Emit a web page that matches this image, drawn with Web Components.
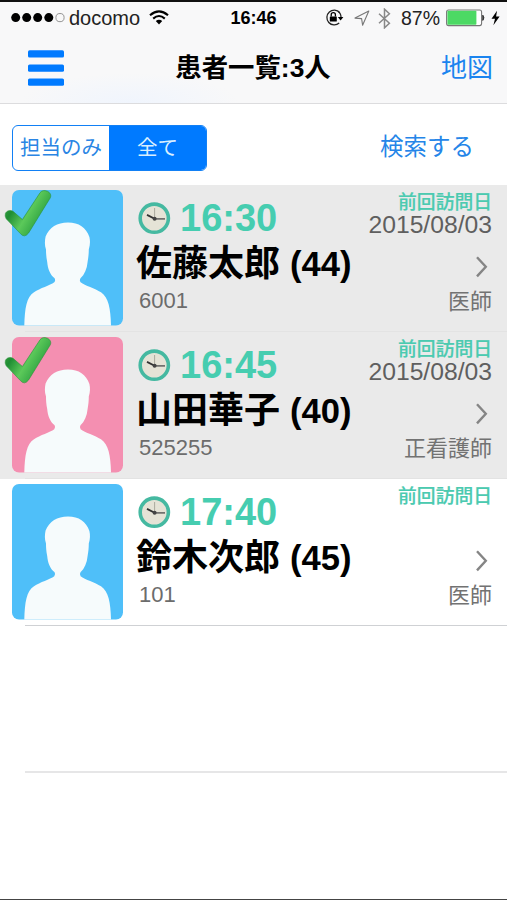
<!DOCTYPE html>
<html lang="ja">
<head>
<meta charset="utf-8">
<title>患者一覧</title>
<style>
html,body{margin:0;padding:0}
body{width:507px;height:900px;overflow:hidden;background:#fff;font-family:"Liberation Sans","Noto Sans CJK JP",sans-serif;color:#000}
</style>
</head>
<body>
<patient-screen></patient-screen>
<script>
const define = (name, html, setup) => customElements.define(name, class extends HTMLElement {
  connectedCallback() {
    if (this.shadowRoot) return;
    this.attachShadow({mode: 'open'}).innerHTML = html;
    if (setup) setup(this, this.shadowRoot);
  }
});

define('status-bar', `
<style>
:host{display:grid;grid-template-columns:1fr auto 1fr;align-items:center;height:32px;padding:0 7px 0 11px;box-sizing:border-box;white-space:nowrap}
.l,.r{display:flex;align-items:center}
.r{justify-content:flex-end}
.c{font-weight:bold;font-size:18px;line-height:32px;margin-left:-4px}
.n{font-size:20px;line-height:32px}
svg{display:block;flex:none}
</style>
<div class="l">
<svg width="54" height="12" viewBox="0 0 54 12"><g fill="#000"><circle cx="4.7" cy="5.6" r="4.5"/><circle cx="15.7" cy="5.6" r="4.5"/><circle cx="26.7" cy="5.6" r="4.5"/><circle cx="37.8" cy="5.6" r="4.5"/></g><circle cx="49" cy="5.6" r="4.1" fill="none" stroke="#888" stroke-width=".9"/></svg>
<span class="n" style="margin-left:4px;color:#222">docomo</span>
<svg style="margin-left:9px" width="20" height="16" viewBox="0 0 20 16"><g fill="none" stroke="#000" stroke-width="2.1"><path d="M1 5.2Q10 -2.6 19 5.2"/><path d="M4.2 8.6Q10 3.4 15.8 8.6"/></g><path d="M6.8 11Q10 8.3 13.2 11L10 14.4Z"/></svg>
</div>
<span class="c">16:46</span>
<div class="r">
<svg width="19" height="18" viewBox="0 0 19 18"><path d="M14.8 3.6A7.4 7.4 0 1 0 14.2 14.1" fill="none" stroke="#222" stroke-width="1.3"/><path d="M13 2.2A7.6 7.6 0 0 1 16 8.6" fill="none" stroke="#222" stroke-width="1.3"/><path d="M12.8 7.9h5.6l-2.8 3.5z"/><rect x="4.8" y="7.4" width="7" height="5.2" rx=".5"/><path d="M6.2 7.6V5.8a2.1 2.1 0 0 1 4.2 0V7.6" fill="none" stroke="#000" stroke-width="1.3"/></svg>
<svg style="margin-left:10px" width="16" height="17" viewBox="0 0 16 17"><path d="M1 8.1L14.8 1L8.6 15.2L7.6 8.6Z" fill="none" stroke="#777" stroke-width="1.1" stroke-linejoin="round"/></svg>
<svg style="margin-left:8px" width="13" height="21" viewBox="0 0 13 21"><path d="M1 5.8L11.4 15.2L6.5 19.8V1.2L11.4 5.8L1 15.2" fill="none" stroke="#888" stroke-width="1.5"/></svg>
<span class="n" style="margin-left:10px;font-size:19.5px;color:#222">87%</span>
<svg style="margin-left:6px" width="39" height="18" viewBox="0 0 39 18"><rect x=".6" y="1" width="35" height="15.6" rx="2" fill="#fff" stroke="#777" stroke-width="1.1"/><rect x="1.4" y="1.8" width="29" height="14" rx=".8" fill="#4cd964"/><path d="M36.8 6.2Q39 8.8 36.8 11.4z" fill="#333" stroke="#333"/></svg>
<svg style="margin-left:6px" width="9" height="16" viewBox="0 0 9 16"><path d="M6 .8L.5 8.8H4L2.4 15.2L8.6 6.6H5.1Z"/></svg>
</div>`);

define('nav-bar', `
<style>
:host{display:grid;grid-template-columns:1fr auto 1fr;align-items:center;height:68px;padding:0 14px 0 28px;box-sizing:border-box}
svg{display:block}
.t{font-size:26.4px;font-weight:bold;line-height:40px;margin-left:-15px}
.m{justify-self:end;font-size:26px;line-height:40px;color:#1b84ef}
</style>
<svg width="36" height="36" viewBox="0 0 36 36" fill="#007aff"><rect y=".2" width="36" height="7.4" rx="1.6"/><rect y="14.4" width="36" height="7.4" rx="1.6"/><rect y="28.4" width="36" height="7.4" rx="1.6"/></svg>
<span class="t"><slot name="title"></slot></span><span class="m"><slot name="action"></slot></span>`);

define('filter-bar', `
<style>
:host{display:flex;align-items:center;justify-content:space-between;height:81px;padding:7px 33px 0 12px;box-sizing:border-box}
.seg{display:flex;width:195px;height:46px;box-sizing:border-box;border:1.5px solid #1280f5;border-radius:6px;overflow:hidden;font-size:20.5px;line-height:44px;text-align:center;background:#fff}
.a{width:96px;color:#2a85e4}
.b{flex:1;background:#007aff;color:#d9efff}
.s{font-size:23.5px;line-height:40px;color:#2585e8;margin-top:-2px}
</style>
<div class="seg"><span class="a">担当のみ</span><span class="b">全て</span></div><span class="s">検索する</span>`);

define('patient-avatar', `
<style>
:host{display:block;position:relative;width:111px;height:136px}
svg{display:block}
.k{position:absolute;left:-8px;top:-1px}
:host(:not([checked])) .k{display:none}
</style>
<svg width="111" height="136" viewBox="0 0 111 136"><rect width="111" height="135.5" rx="7" fill="var(--tone,#4fbff9)"/><path d="M12.3 135.5C12.8 118 14.5 107 22 102.2C28 98 38 95.5 42.3 92.2Q43.8 90.5 42.6 88.3C38 84.5 35.8 79 35.2 72C34.2 67 34 63 34 59.5C32.4 55 32.8 50 33.6 46.5C37.5 37.5 45 32.6 56 32.6C67 32.6 74 37.5 77.4 47C78.3 51 78.2 55 76.8 59.5C76.8 64 76.3 68 75.6 72C75 79 72.5 84.5 68.5 88.3Q67.2 90.5 68.6 92.2C73 95.5 83 98.5 89 102.2C96.5 107.5 98.5 118 99 135.5Z" fill="#f6fbfc"/></svg>
<svg class="k" width="50" height="50" viewBox="0 0 50 50"><defs><linearGradient id="g" x1="0" y1=".2" x2="1" y2=".8"><stop offset="0" stop-color="#3da63f"/><stop offset=".22" stop-color="#1f8d33"/><stop offset=".5" stop-color="#5cc95a"/><stop offset=".75" stop-color="#35a845"/><stop offset="1" stop-color="#2a9a3a"/></linearGradient></defs><path d="M1.4 24.5C2.6 21.5 6.5 20.8 9 22.3L18.4 30.5L36 3.8C37.5 1.6 40.5 .9 43.5 2.3C46.5 3.8 47.5 6.5 46.2 9L24.6 44Q20.4 49.4 16.4 44.6L2.2 29.8Q.6 27 1.4 24.5Z" fill="url(#g)" stroke="#299239" stroke-width=".6"/></svg>`);

define('visit-clock', `
<style>:host{display:block;width:33px;height:33px}svg{display:block}</style>
<svg width="33" height="33" viewBox="0 0 33 33"><circle cx="16.3" cy="16.2" r="14.1" fill="#e5e3d6" stroke="#45b9a1" stroke-width="3.6"/><path d="M16.6 16.7V6" stroke="#aaa99e" stroke-width="1"/><path d="M16.6 16.7L9 12.9" stroke="#333" stroke-width="1.8"/><path d="M16.6 16.9H27" stroke="#555" stroke-width="1.4"/><circle cx="16.6" cy="16.7" r="2" fill="#444"/></svg>`);

define('patient-row', `
<style>
:host{display:grid;grid-template-columns:111px 1fr auto;height:147px;padding:5px 15px 0 12px;box-sizing:border-box;background:#fff;position:relative;white-space:nowrap}
:host([checked]){background:#eaeaea}
:host([pink]){--tone:#f48fb1}
.i{padding-left:14px}
.v{display:flex;align-items:center;height:57px;gap:9px;padding-left:1px}
.time{font-size:38px;line-height:57px;font-weight:bold;color:#46cdb0}
.name{font-size:36px;line-height:38px;height:38px;font-weight:bold;margin:-2px 0 0 -1px}
.name span{font-size:34.6px}
.id{font-size:22px;line-height:36px;color:#6c6c6c;padding-left:2px}
.e{display:flex;flex-direction:column;align-items:flex-end}
.lab{font-size:18.8px;line-height:24px;height:24px;font-weight:500;-webkit-text-stroke:.2px #4bcab0;color:#4bcab0;padding-top:1px;margin-bottom:-1px}
.date{font-size:24.7px;line-height:22px;height:22px;color:#5f5f5f}
.e svg{display:block;margin:20px 4px 0 0}
.role{font-size:22px;line-height:32px;color:#727272;margin-top:8px}
.line{position:absolute;left:25px;right:0;bottom:0;height:1px;background:#cfd1d4}
:host([checked]) .line{background:#e3e3e3}
</style>
<patient-avatar></patient-avatar>
<div class="i"><div class="v"><visit-clock></visit-clock><span class="time"></span></div><div class="name"><slot></slot> <span></span></div><div class="id"></div></div>
<div class="e"><span class="lab">前回訪問日</span><span class="date"></span><svg width="14" height="22" viewBox="0 0 14 22"><path d="M3 1.2L11.8 10.8L3 20.4" fill="none" stroke="#858585" stroke-width="2.4"/></svg><span class="role"></span></div>
<div class="line"></div>`, (h, r) => {
  const set = (s, a) => r.querySelector(s).textContent = h.getAttribute(a) || '';
  set('.time', 'time'); set('.id', 'code'); set('.date', 'date'); set('.role', 'role-name');
  r.querySelector('.name span').textContent = '(' + h.getAttribute('age') + ')';
  if (h.hasAttribute('checked')) r.querySelector('patient-avatar').setAttribute('checked', '');
});

define('patient-screen', `
<style>
:host{display:flex;flex-direction:column;height:900px;box-sizing:border-box;border-top:2px solid #111;border-bottom:1px solid #444;background:#fff}
header{background:radial-gradient(ellipse 110px 30px at 130px 100%,#f0f5fd,transparent),#f8f8f9;border-bottom:1px solid #dcdcde;height:102px;box-sizing:border-box}
.empty{height:147px;margin-left:25px;box-sizing:border-box;border-bottom:2px solid #e6e6e7}
</style>
<header><status-bar></status-bar><nav-bar><span slot="title">患者一覧:3人</span><span slot="action">地図</span></nav-bar></header>
<filter-bar></filter-bar>
<main>
<patient-row checked time="16:30" age="44" code="6001" date="2015/08/03" role-name="医師">佐藤太郎</patient-row>
<patient-row checked pink time="16:45" age="40" code="525255" date="2015/08/03" role-name="正看護師">山田華子</patient-row>
<patient-row time="17:40" age="45" code="101" role-name="医師">鈴木次郎</patient-row>
<div class="empty"></div>
</main>`);
</script>
</body>
</html>
